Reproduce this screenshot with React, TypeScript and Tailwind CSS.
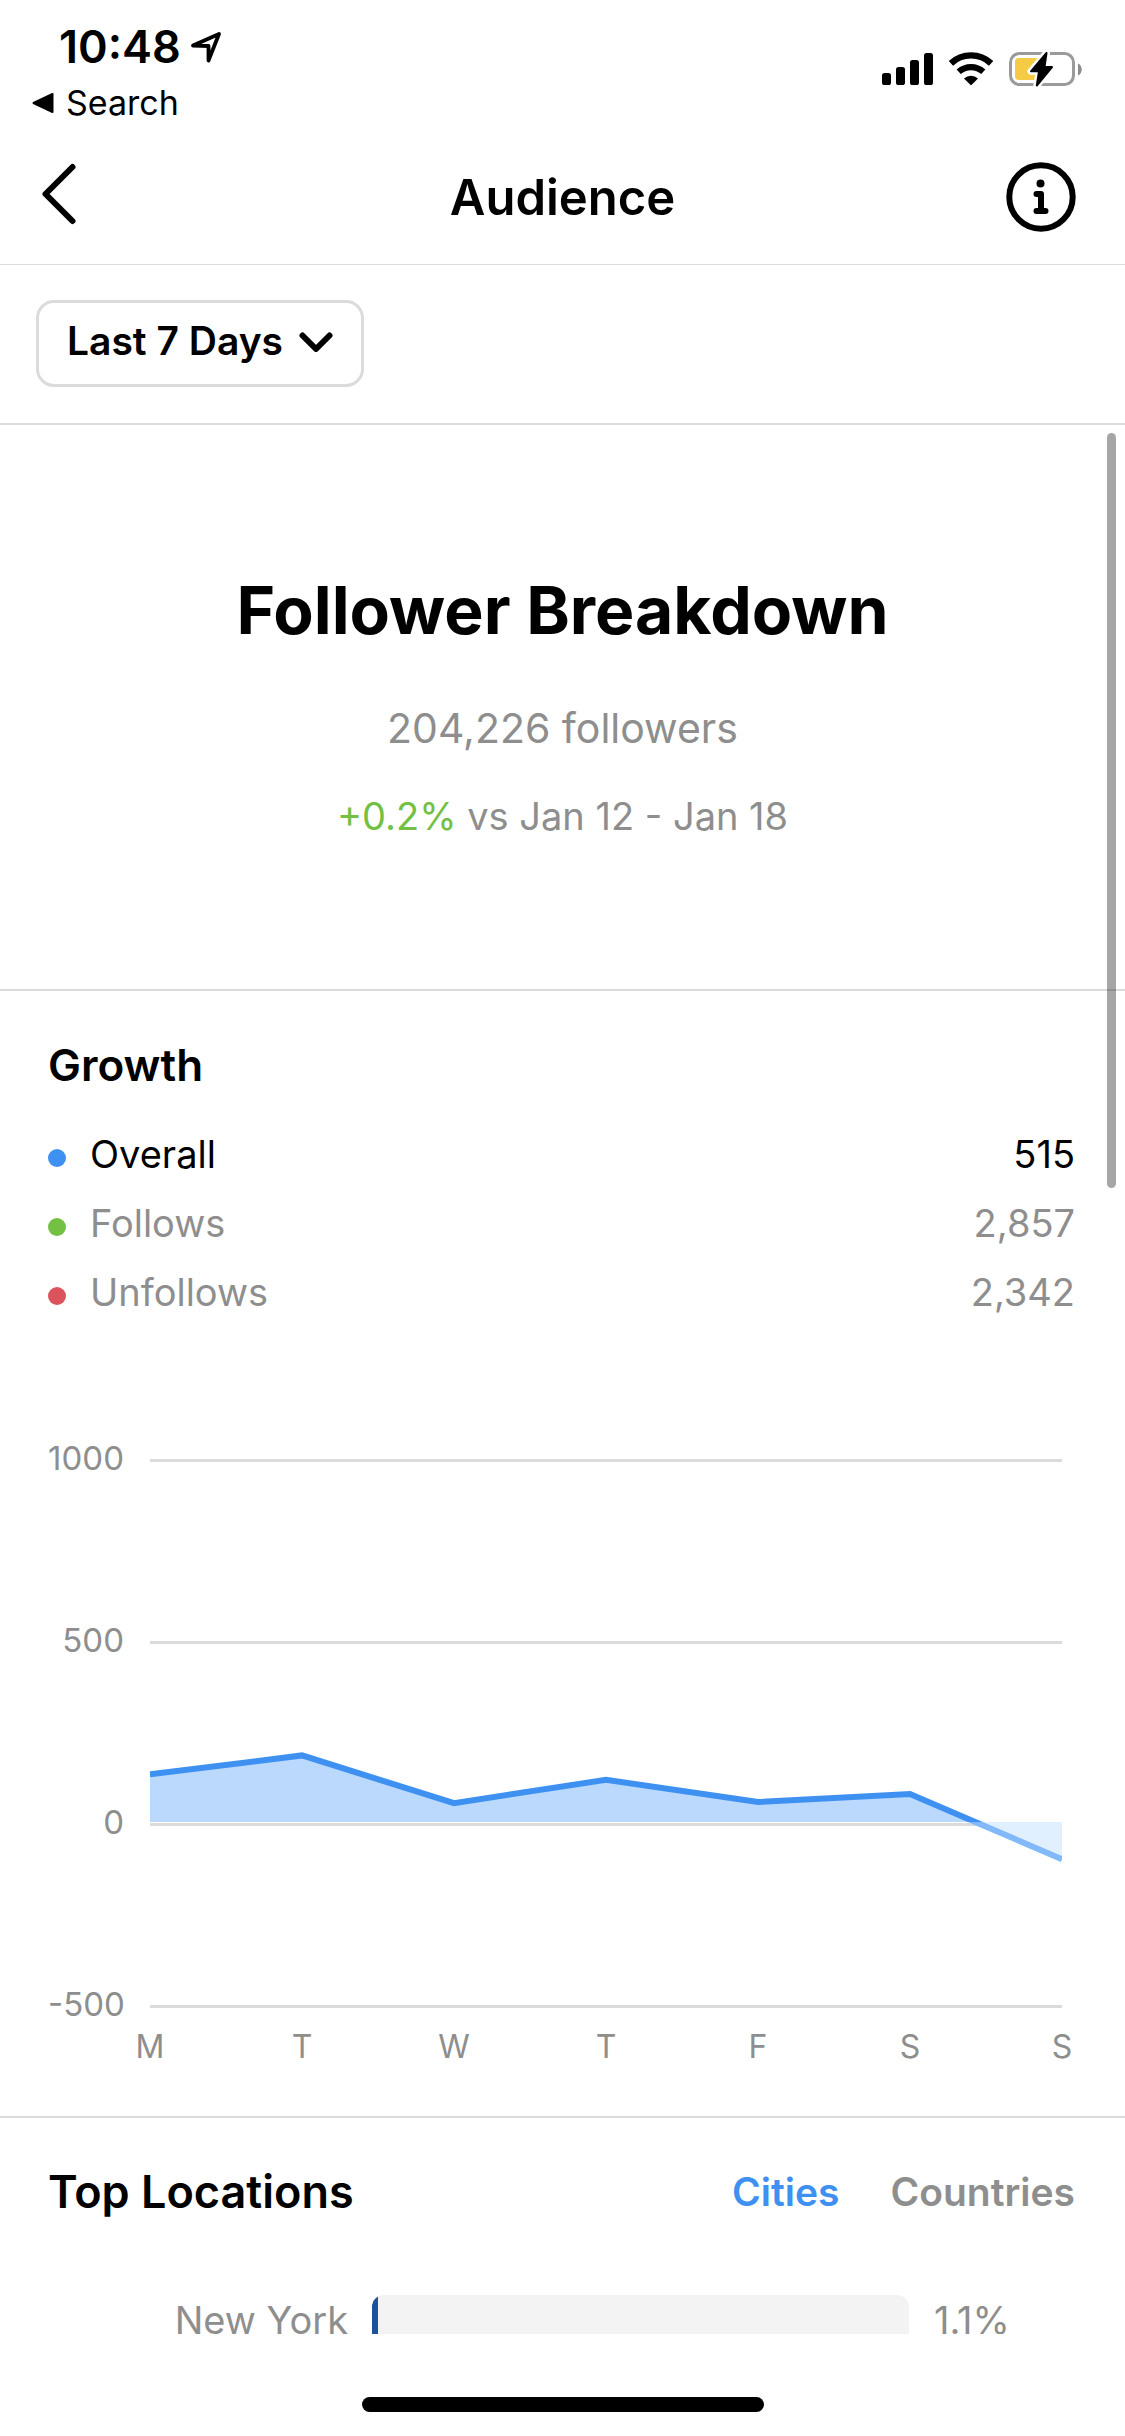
import type { ReactNode } from 'react'

interface GrowthStat {
  label: string
  value: string
  dot: string
  active?: boolean
}

const stats: GrowthStat[] = [
  { label: 'Overall', value: '515', dot: 'bg-[#3f91f1]', active: true },
  { label: 'Follows', value: '2,857', dot: 'bg-[#73c043]' },
  { label: 'Unfollows', value: '2,342', dot: 'bg-[#db545b]' },
]

const days = ['M', 'T', 'W', 'T', 'F', 'S', 'S']
const ticks = [1000, 500, 0, -500]
const daily = [135, 187, 56, 120, 59, 81, -98]
const locations = [{ name: 'New York', percent: 1.1 }]

function StatusBar() {
  return (
    <div className="flex items-start justify-between pt-[19px] pr-[43px] pl-8">
      <div>
        <div className="flex items-center gap-[9px] pl-[27px] text-[45px] leading-[56px] font-semibold">
          10:48
          <svg width="32" height="32" viewBox="0 0 32 32" fill="none" aria-hidden="true">
            <path
              d="M3 14.500 29 3 18.500 29.500V15Z"
              stroke="#000"
              strokeWidth="3.800"
              strokeLinejoin="round"
            />
          </svg>
        </div>
        <a href="#search" className="flex items-center gap-3 text-[34px] leading-[56px]">
          <svg width="22" height="22" viewBox="0 0 22 22" aria-hidden="true">
            <path d="M1.500 11 20.500 2V20Z" stroke="#000" strokeWidth="2" strokeLinejoin="round" />
          </svg>
          Search
        </a>
      </div>
      <div className="flex items-center gap-[15px] pt-8">
        <svg width="51" height="34" viewBox="0 0 51 34" aria-hidden="true">
          <rect x="0" y="21" width="9" height="12" rx="2.600" />
          <rect x="14" y="15" width="9" height="18" rx="2.600" />
          <rect x="28" y="8" width="9" height="25" rx="2.600" />
          <rect x="42" y="1" width="9" height="32" rx="2.600" />
        </svg>
        <svg width="46" height="34" viewBox="0 0 46 34" fill="none" aria-hidden="true">
          <path d="M2.900 11.300a29.500 29.500 0 0 1 40.200 0" stroke="#000" strokeWidth="6.400" />
          <path d="M10.700 19.800a18.400 18.400 0 0 1 24.600 0" stroke="#000" strokeWidth="6.200" />
          <path d="M16 26.500a10.500 10.500 0 0 1 14 0L23.700 32.800a1 1 0 0 1-1.400 0Z" fill="#000" />
        </svg>
        <svg width="73" height="36" viewBox="0 0 73 36" fill="none" aria-hidden="true">
          <rect x="1.500" y="2.500" width="63" height="31" rx="9" stroke="#9a9a9a" strokeWidth="3" />
          <path d="M69 12.500c5 2 5 10 0 12Z" fill="#8c8c8c" />
          <path d="M10 7h20v22H10a4 4 0 0 1-4-4V11a4 4 0 0 1 4-4Z" fill="#f5ca45" />
          <path
            d="M37.500 2 22 20.300h8L27.800 34.500 43 16h-7.500Z"
            fill="#000"
            stroke="#fff"
            strokeWidth="7"
            strokeLinejoin="round"
          />
          <path
            d="M37.500 2 22 20.300h8L27.800 34.500 43 16h-7.500Z"
            fill="#000"
            stroke="#000"
            strokeWidth="2"
            strokeLinejoin="round"
          />
        </svg>
      </div>
    </div>
  )
}

function NavBar() {
  return (
    <header className="mt-px grid h-[133px] grid-cols-[1fr_auto_1fr] items-center border-b border-[#dbdbdb] px-[41px]">
      <button type="button" aria-label="Back" className="justify-self-start">
        <svg width="36" height="72" viewBox="0 0 36 72" fill="none">
          <path
            d="M31.500 5 4.500 32l27 27"
            stroke="#000"
            strokeWidth="6"
            strokeLinecap="round"
            strokeLinejoin="round"
          />
        </svg>
      </button>
      <h1 className="text-[49px] leading-[60px] font-semibold">Audience</h1>
      <button type="button" aria-label="Information" className="justify-self-end pr-2">
        <svg width="70" height="72" viewBox="0 0 70 72" fill="none">
          <circle cx="35" cy="35" r="31.700" stroke="#000" strokeWidth="6" />
          <circle cx="34.500" cy="21.500" r="4" fill="#000" />
          <path
            d="M30.500 32H35V49M30.500 49h9"
            stroke="#000"
            strokeWidth="6"
            strokeLinecap="round"
            strokeLinejoin="round"
          />
        </svg>
      </button>
    </header>
  )
}

function FilterBar() {
  return (
    <div className="border-b-2 border-[#dbdbdb] px-9 pt-[35px] pb-9">
      <button
        type="button"
        className="flex items-center gap-4 rounded-[18px] border-3 border-[#dbdbdb] px-7 pt-[10px] pb-4 text-[39px] leading-[55px] font-semibold"
      >
        Last 7 Days
        <svg width="34" height="22" viewBox="0 0 34 22" fill="none" aria-hidden="true">
          <path
            d="M3.500 5.500 17 19 30.500 5.500"
            stroke="#000"
            strokeWidth="6"
            strokeLinecap="round"
            strokeLinejoin="round"
          />
        </svg>
      </button>
    </div>
  )
}

function FollowerBreakdown() {
  return (
    <section className="border-b-2 border-[#dbdbdb] py-[145px] text-center text-[#8e8e8e]">
      <h2 className="text-[66px] leading-[80px] font-bold text-black">Follower Breakdown</h2>
      <p className="mt-[50px] text-[41px] leading-[56px]">204,226 followers</p>
      <p className="mt-8 text-[38px] leading-[56px]">
        <span className="text-[#73c043]">+0.2%</span> vs Jan 12 - Jan 18
      </p>
    </section>
  )
}

function GrowthChart() {
  const step = 912 / (daily.length - 1)
  const points = daily.map((value, i) => ({ x: i * step, y: 364.5 - value * 0.364 }))
  const line = points.map((p) => `${p.x},${p.y}`).join(' ')

  return (
    <div className="mt-[111px] pr-[13px]">
      <div className="flex gap-[26px]">
        <div className="flex w-[76px] flex-col justify-between text-right text-[33px] leading-10">
          {ticks.map((tick) => (
            <span key={tick} className="whitespace-nowrap">
              {tick}
            </span>
          ))}
        </div>
        <svg
          className="mt-[21px] mb-4 h-[549px] min-w-0 flex-1"
          viewBox="0 0 912 549"
          preserveAspectRatio="none"
          role="img"
          aria-label="Overall follower growth by day"
        >
          <defs>
            <clipPath id="gain">
              <rect x="0" y="0" width="912" height="363" />
            </clipPath>
            <clipPath id="loss">
              <rect x="0" y="363" width="912" height="186" />
            </clipPath>
          </defs>
          {ticks.map((tick, i) => (
            <rect key={tick} x="0" y={i * 182} width="912" height="3" fill="#dbdbdb" />
          ))}
          <g clipPath="url(#gain)">
            <polygon points={`0,363 ${line} 912,363`} fill="#bad9fc" />
            <polyline points={line} fill="none" stroke="#3f91f1" strokeWidth="6" />
          </g>
          <g clipPath="url(#loss)">
            <polygon points={`0,363 ${line} 912,363`} fill="#e1f0fe" />
            <polyline points={line} fill="none" stroke="#82b9fa" strokeWidth="6" />
          </g>
        </svg>
      </div>
      <div className="-mr-5 ml-[82px] flex justify-between pt-[3px] text-[32px] leading-10">
        {days.map((day, i) => (
          <span key={i} className="w-10 text-center">
            {day}
          </span>
        ))}
      </div>
    </div>
  )
}

function Growth() {
  return (
    <section className="border-b-2 border-[#dbdbdb] pt-[46px] pr-[50px] pb-[49px] pl-12 text-[#8e8e8e]">
      <h3 className="text-[44px] leading-[56px] font-semibold text-black">Growth</h3>
      <ul className="mt-[27px]">
        {stats.map((stat) => (
          <li
            key={stat.label}
            className={`flex items-center text-[38px] leading-[69px] ${stat.active ? 'text-black' : ''}`}
          >
            <span className={`mt-1.5 mr-6 size-[18px] rounded-full ${stat.dot}`} />
            <span className="flex-1">{stat.label}</span>
            <span>{stat.value}</span>
          </li>
        ))}
      </ul>
      <GrowthChart />
    </section>
  )
}

function Tab({ active, children }: { active?: boolean; children: ReactNode }) {
  return (
    <button type="button" role="tab" aria-selected={!!active} className={active ? 'text-[#3f91f1]' : ''}>
      {children}
    </button>
  )
}

function TopLocations() {
  return (
    <section className="pt-[46px] pr-[50px] pl-12 text-[#8e8e8e]">
      <div className="flex items-center justify-between leading-[56px]">
        <h3 className="text-[45px] font-semibold text-black">Top Locations</h3>
        <div role="tablist" className="flex gap-[51px] text-[39px] font-semibold">
          <Tab active>Cities</Tab>
          <Tab>Countries</Tab>
        </div>
      </div>
      <ul className="mt-[75px]">
        {locations.map((location) => (
          <li key={location.name} className="flex text-[38px] leading-[50px]">
            <span className="w-[300px] text-right">{location.name}</span>
            <div className="mr-[25px] ml-6 flex-1 overflow-hidden rounded-xl bg-[#f3f3f3]">
              <div className="h-full bg-[#1c519d]" style={{ width: `${location.percent}%` }} />
            </div>
            <span className="w-[141px]">{location.percent}%</span>
          </li>
        ))}
      </ul>
    </section>
  )
}

export default function App() {
  return (
    <div className="flex h-screen flex-col bg-white font-['Inter',sans-serif] text-black">
      <StatusBar />
      <NavBar />
      <FilterBar />
      <div className="relative min-h-0 flex-1">
        <main className="h-full overflow-y-auto [scrollbar-width:none]">
          <FollowerBreakdown />
          <Growth />
          <TopLocations />
        </main>
        <div className="absolute top-2 right-[9px] h-[755px] w-[9px] rounded-full bg-black/35" />
      </div>
      <footer className="flex justify-center pt-[63px] pb-6">
        <div className="h-[15px] w-[402px] rounded-full bg-black" />
      </footer>
    </div>
  )
}
